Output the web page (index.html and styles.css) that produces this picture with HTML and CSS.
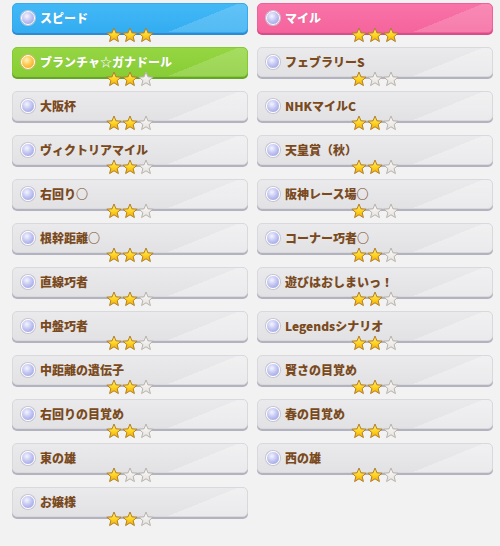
FILE: index.html
```html
<!DOCTYPE html>
<html lang="ja">
<head>
  <meta charset="UTF-8">
  <meta name="viewport" content="width=device-width, initial-scale=1.0">
  <title>Skills</title>
  <link rel="stylesheet" href="styles.css">
</head>
<body>

  <svg class="defs" width="0" height="0" aria-hidden="true">
    <defs>
      <linearGradient id="gold" x1="0" y1="0" x2="0" y2="1">
        <stop offset="0" stop-color="#fff27a"/>
        <stop offset="0.55" stop-color="#ffd21f"/>
        <stop offset="1" stop-color="#f2a900"/>
      </linearGradient>
      <linearGradient id="grey" x1="0" y1="0" x2="0" y2="1">
        <stop offset="0" stop-color="#fbfbfb"/>
        <stop offset="1" stop-color="#e4e2e0"/>
      </linearGradient>
      <symbol id="star-on" viewBox="0 0 16 16">
        <polygon points="8,1 9.94,5.83 15.13,6.18 11.14,9.52 12.41,14.57 8,11.8 3.59,14.57 4.86,9.52 0.87,6.18 6.06,5.83" fill="url(#gold)" stroke="#b07f28" stroke-width="1" stroke-linejoin="round"/>
      </symbol>
      <symbol id="star-off" viewBox="0 0 16 16">
        <polygon points="8,1 9.94,5.83 15.13,6.18 11.14,9.52 12.41,14.57 8,11.8 3.59,14.57 4.86,9.52 0.87,6.18 6.06,5.83" fill="url(#grey)" stroke="#b9b2ab" stroke-width="1" stroke-linejoin="round"/>
      </symbol>
    </defs>
  </svg>

  <div class="skills">
    <!-- row 1 -->
    <div class="item">
      <div class="card blue"><span class="dot"></span><span class="name">スピード</span></div>
      <div class="stars"><svg class="star"><use href="#star-on"/></svg><svg class="star"><use href="#star-on"/></svg><svg class="star"><use href="#star-on"/></svg></div>
    </div>
    <div class="item">
      <div class="card pink"><span class="dot"></span><span class="name">マイル</span></div>
      <div class="stars"><svg class="star"><use href="#star-on"/></svg><svg class="star"><use href="#star-on"/></svg><svg class="star"><use href="#star-on"/></svg></div>
    </div>

    <!-- row 2 -->
    <div class="item">
      <div class="card green"><span class="dot gold"></span><span class="name">ブランチャ☆ガナドール</span></div>
      <div class="stars"><svg class="star"><use href="#star-on"/></svg><svg class="star"><use href="#star-on"/></svg><svg class="star"><use href="#star-off"/></svg></div>
    </div>
    <div class="item">
      <div class="card"><span class="dot"></span><span class="name">フェブラリーS</span></div>
      <div class="stars"><svg class="star"><use href="#star-on"/></svg><svg class="star"><use href="#star-off"/></svg><svg class="star"><use href="#star-off"/></svg></div>
    </div>

    <!-- row 3 -->
    <div class="item">
      <div class="card"><span class="dot"></span><span class="name">大阪杯</span></div>
      <div class="stars"><svg class="star"><use href="#star-on"/></svg><svg class="star"><use href="#star-on"/></svg><svg class="star"><use href="#star-off"/></svg></div>
    </div>
    <div class="item">
      <div class="card"><span class="dot"></span><span class="name">NHKマイルC</span></div>
      <div class="stars"><svg class="star"><use href="#star-on"/></svg><svg class="star"><use href="#star-on"/></svg><svg class="star"><use href="#star-off"/></svg></div>
    </div>

    <!-- row 4 -->
    <div class="item">
      <div class="card"><span class="dot"></span><span class="name">ヴィクトリアマイル</span></div>
      <div class="stars"><svg class="star"><use href="#star-on"/></svg><svg class="star"><use href="#star-on"/></svg><svg class="star"><use href="#star-off"/></svg></div>
    </div>
    <div class="item">
      <div class="card"><span class="dot"></span><span class="name">天皇賞（秋）</span></div>
      <div class="stars"><svg class="star"><use href="#star-on"/></svg><svg class="star"><use href="#star-on"/></svg><svg class="star"><use href="#star-off"/></svg></div>
    </div>

    <!-- row 5 -->
    <div class="item">
      <div class="card"><span class="dot"></span><span class="name">右回り○</span></div>
      <div class="stars"><svg class="star"><use href="#star-on"/></svg><svg class="star"><use href="#star-on"/></svg><svg class="star"><use href="#star-off"/></svg></div>
    </div>
    <div class="item">
      <div class="card"><span class="dot"></span><span class="name">阪神レース場○</span></div>
      <div class="stars"><svg class="star"><use href="#star-on"/></svg><svg class="star"><use href="#star-off"/></svg><svg class="star"><use href="#star-off"/></svg></div>
    </div>

    <!-- row 6 -->
    <div class="item">
      <div class="card"><span class="dot"></span><span class="name">根幹距離○</span></div>
      <div class="stars"><svg class="star"><use href="#star-on"/></svg><svg class="star"><use href="#star-on"/></svg><svg class="star"><use href="#star-on"/></svg></div>
    </div>
    <div class="item">
      <div class="card"><span class="dot"></span><span class="name">コーナー巧者○</span></div>
      <div class="stars"><svg class="star"><use href="#star-on"/></svg><svg class="star"><use href="#star-on"/></svg><svg class="star"><use href="#star-off"/></svg></div>
    </div>

    <!-- row 7 -->
    <div class="item">
      <div class="card"><span class="dot"></span><span class="name">直線巧者</span></div>
      <div class="stars"><svg class="star"><use href="#star-on"/></svg><svg class="star"><use href="#star-on"/></svg><svg class="star"><use href="#star-off"/></svg></div>
    </div>
    <div class="item">
      <div class="card"><span class="dot"></span><span class="name">遊びはおしまいっ！</span></div>
      <div class="stars"><svg class="star"><use href="#star-on"/></svg><svg class="star"><use href="#star-on"/></svg><svg class="star"><use href="#star-off"/></svg></div>
    </div>

    <!-- row 8 -->
    <div class="item">
      <div class="card"><span class="dot"></span><span class="name">中盤巧者</span></div>
      <div class="stars"><svg class="star"><use href="#star-on"/></svg><svg class="star"><use href="#star-on"/></svg><svg class="star"><use href="#star-off"/></svg></div>
    </div>
    <div class="item">
      <div class="card"><span class="dot"></span><span class="name">Legendsシナリオ</span></div>
      <div class="stars"><svg class="star"><use href="#star-on"/></svg><svg class="star"><use href="#star-on"/></svg><svg class="star"><use href="#star-off"/></svg></div>
    </div>

    <!-- row 9 -->
    <div class="item">
      <div class="card"><span class="dot"></span><span class="name">中距離の遺伝子</span></div>
      <div class="stars"><svg class="star"><use href="#star-on"/></svg><svg class="star"><use href="#star-on"/></svg><svg class="star"><use href="#star-off"/></svg></div>
    </div>
    <div class="item">
      <div class="card"><span class="dot"></span><span class="name">賢さの目覚め</span></div>
      <div class="stars"><svg class="star"><use href="#star-on"/></svg><svg class="star"><use href="#star-on"/></svg><svg class="star"><use href="#star-off"/></svg></div>
    </div>

    <!-- row 10 -->
    <div class="item">
      <div class="card"><span class="dot"></span><span class="name">右回りの目覚め</span></div>
      <div class="stars"><svg class="star"><use href="#star-on"/></svg><svg class="star"><use href="#star-on"/></svg><svg class="star"><use href="#star-off"/></svg></div>
    </div>
    <div class="item">
      <div class="card"><span class="dot"></span><span class="name">春の目覚め</span></div>
      <div class="stars"><svg class="star"><use href="#star-on"/></svg><svg class="star"><use href="#star-on"/></svg><svg class="star"><use href="#star-off"/></svg></div>
    </div>

    <!-- row 11 -->
    <div class="item">
      <div class="card"><span class="dot"></span><span class="name">東の雄</span></div>
      <div class="stars"><svg class="star"><use href="#star-on"/></svg><svg class="star"><use href="#star-off"/></svg><svg class="star"><use href="#star-off"/></svg></div>
    </div>
    <div class="item">
      <div class="card"><span class="dot"></span><span class="name">西の雄</span></div>
      <div class="stars"><svg class="star"><use href="#star-on"/></svg><svg class="star"><use href="#star-on"/></svg><svg class="star"><use href="#star-off"/></svg></div>
    </div>

    <!-- row 12 -->
    <div class="item">
      <div class="card"><span class="dot"></span><span class="name">お嬢様</span></div>
      <div class="stars"><svg class="star"><use href="#star-on"/></svg><svg class="star"><use href="#star-on"/></svg><svg class="star"><use href="#star-off"/></svg></div>
    </div>
  </div>

</body>
</html>
```

FILE: styles.css
```css
body {
  margin: 0;
  background-color: #f2f2f3;
  font-family: "Noto Sans CJK JP", "Noto Sans", sans-serif;
}
.defs {
  display: block;
  width: 0;
  height: 0;
  overflow: hidden;
}
.skills {
  display: grid;
  grid-template-columns: 236px 236px;
  column-gap: 9px;
  row-gap: 4px;
  padding: 3px 7px 0 12px;
}
.item {
  display: flex;
  flex-direction: column;
}
.card {
  display: flex;
  align-items: center;
  gap: 5px;
  height: 30px;
  box-sizing: border-box;
  padding-left: 8px;
  padding-bottom: 1px;
  border-radius: 5px;
  border: 1px solid #d9d9dd;
  background-color: #e6e6e8;
  background-image:
    linear-gradient(158deg, rgba(255, 255, 255, 0) 0 74%, rgba(255, 255, 255, 0.3) 74% 100%),
    linear-gradient(to bottom, #eaeaec, #e2e2e5);
  box-shadow: 0 2px 0 #b3b2bf;
}
.card.blue {
  border-color: #3aa8ec;
  background-color: #3ab2f4;
  background-image:
    linear-gradient(158deg, rgba(255, 255, 255, 0) 0 74%, rgba(255, 255, 255, 0.16) 74% 100%),
    linear-gradient(to bottom, #42b8f6, #34adf1);
  box-shadow: 0 2px 0 #2b8bd3;
}
.card.green {
  border-color: #85c934;
  background-color: #8ed33b;
  background-image:
    linear-gradient(158deg, rgba(255, 255, 255, 0) 0 74%, rgba(255, 255, 255, 0.16) 74% 100%),
    linear-gradient(to bottom, #95d642, #88cd35);
  box-shadow: 0 2px 0 #67a52a;
}
.card.pink {
  border-color: #f0609a;
  background-color: #f76ba2;
  background-image:
    linear-gradient(158deg, rgba(255, 255, 255, 0) 0 74%, rgba(255, 255, 255, 0.16) 74% 100%),
    linear-gradient(to bottom, #f873a8, #f5649d);
  box-shadow: 0 2px 0 #d64d88;
}
.dot {
  width: 12px;
  height: 12px;
  flex: none;
  border-radius: 50%;
  border: 1.5px solid #ffffff;
  background: radial-gradient(circle at 40% 35%, #f6f5ff 0, #c3c6f2 45%, #8f96dc 100%);
  box-shadow: 0 0 0 1px #c4c4d6;
}
.dot.gold {
  background: radial-gradient(circle at 40% 35%, #fff6c0 0, #ffc84e 45%, #f39a12 100%);
  box-shadow: 0 0 0 1px #d9b860;
}
.name {
  font-size: 12px;
  font-weight: 900;
  color: #7a4a1d;
  white-space: nowrap;
}
.blue .name,
.green .name,
.pink .name {
  color: #ffffff;
  text-shadow: 0 0 1px rgba(0, 0, 0, 0.15);
}
.stars {
  display: flex;
  justify-content: center;
  margin-top: -5px;
  height: 15px;
}
.star {
  width: 16px;
  height: 16px;
  margin-top: -1px;
}
```
